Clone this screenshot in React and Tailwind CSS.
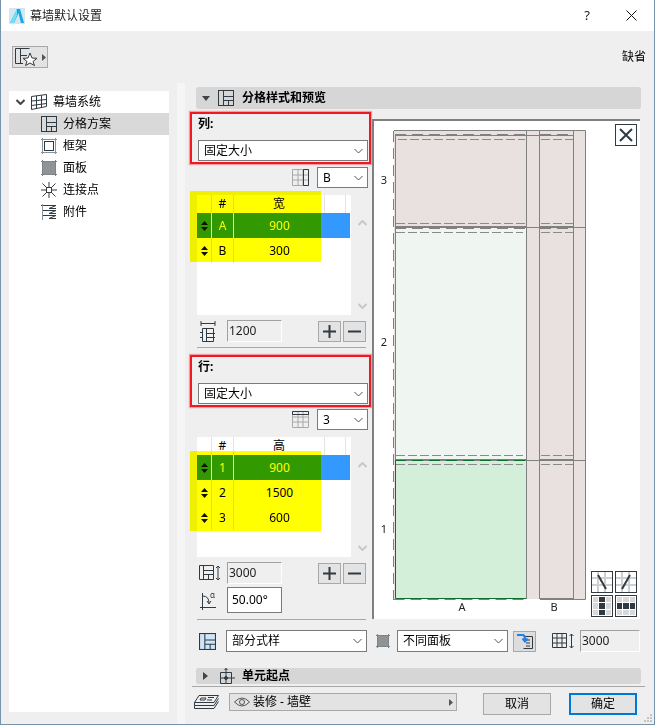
import React from "react";

const C = "#2f3a42";

function SchemeIcon({ size = 16, fill = "none" }) {
  return (
    <svg width={size} height={size} viewBox="0 0 16 16" className="block shrink-0" fill="none" stroke={C} strokeWidth="1">
      <rect x="0.5" y="0.5" width="15" height="15" fill={fill} />
      <path d="M5.5 .5V15.5M5.5 6.5H15.5M5.5 10.5H15.5M10.5 10.5V15.5" />
    </svg>
  );
}

function Chevron({ color = "#555", className = "", bold = false }) {
  return (
    <svg width="9" height="6" viewBox="0 0 9 6" className={"block shrink-0 " + className} fill="none" stroke={color} strokeWidth={bold ? 2 : 1}>
      <path d="M.5 1L4.5 5L8.5 1" />
    </svg>
  );
}

function TreeRow({ icon, label, selected, indent = 32 }) {
  return (
    <div className={"flex h-[22px] items-center " + (selected ? "bg-[#d9d9d9]" : "")} style={{ paddingLeft: indent }}>
      <div className="w-[22px] shrink-0 flex justify-start">{icon}</div>
      <span className="text-[12px] leading-none text-black">{label}</span>
    </div>
  );
}

function Select({ label, className = "" }) {
  return (
    <div className={"flex items-center justify-between bg-white border border-[#7a7a7a] pl-[5px] pr-[4px] text-[12px] leading-none text-black " + className}>
      <span>{label}</span>
      <Chevron />
    </div>
  );
}

function RedBox({ title }) {
  return (
    <div className="ml-[5px] h-[52px] w-[181px] border-2 border-[#f01822] pl-[6px] pr-[1px] shadow-[0_0_1px_1px_#f5a0a0]">
      <div className="mb-[6px] h-[20px] flex items-center text-[12px] leading-none font-bold text-black">{title}</div>
      <Select label="固定大小" className="h-[21px] w-[170px]" />
    </div>
  );
}

function Updown() {
  return (
    <svg width="7" height="10" viewBox="0 0 7 10" className="block" fill="#111">
      <path d="M3.5 0L7 4H0ZM0 6H7L3.5 10Z" />
    </svg>
  );
}

function DataTable({ head, rows, overlayTop, overlayH }) {
  return (
    <div className="relative ml-[5px] flex w-[181px] pl-[7px]">
      <div className="h-[120px] w-[154px] bg-white text-[12px] leading-none text-black">
        <div className="flex h-[18px]">
          <div className="w-[15px] border-r border-[#e4e4e4]" />
          <div className="w-[22px] border-r border-[#e4e4e4] flex items-center justify-center">#</div>
          <div className="w-[91px] border-r border-[#e4e4e4] flex items-center justify-center">{head}</div>
          <div className="w-[21px] border-r border-[#e4e4e4]" />
        </div>
        {rows.map((r, i) => (
          <div key={r[0]} className={"flex h-[25px] w-[153px] " + (i === 0 ? "bg-[#3399ff] text-white" : "")}>
            <div className={"w-[15px] border-r flex items-center justify-center " + (i === 0 ? "border-white" : "border-[#e4e4e4]")}>
              <Updown />
            </div>
            <div className={"w-[22px] border-r flex items-center justify-center " + (i === 0 ? "border-white" : "border-[#e4e4e4]")}>{r[0]}</div>
            <div className="w-[91px] flex items-center justify-center">{r[1]}</div>
          </div>
        ))}
      </div>
      <div className="flex h-[120px] w-[20px] flex-col items-center justify-between pl-[2px] pt-[25px] pb-[6px]">
        <Chevron color="#c8c8c8" bold className="rotate-180" />
        <Chevron color="#c8c8c8" bold />
      </div>
      <div className="absolute left-0 w-[131px] bg-[#ffff00] mix-blend-multiply" style={{ top: overlayTop, height: overlayH }} />
    </div>
  );
}

function GridSmall({ last }) {
  return (
    <svg width="17" height="17" viewBox="0 0 17 17" className="block shrink-0" fill="none" stroke="#a8a8a8">
      <path d="M.5 .5H16.5V16.5H.5ZM.5 6H16.5M.5 11H16.5M6 .5V16.5M11 .5V16.5" />
      {last === "col" ? <path d="M11.5 .5H16.5V16.5H11.5Z" stroke={C} /> : <path d="M.5 .5H16.5V3.5H.5Z" stroke={C} />}
    </svg>
  );
}

function PlusMinus() {
  return (
    <div className="flex gap-[2px]">
      <div className="flex h-[21px] w-[23px] items-center justify-center border border-[#a8a8a8] bg-[#e3e3e3]">
        <svg width="13" height="13" viewBox="0 0 13 13" className="block" stroke={C} strokeWidth="2"><path d="M6.5 0V13M0 6.5H13" /></svg>
      </div>
      <div className="flex h-[21px] w-[23px] items-center justify-center border border-[#a8a8a8] bg-[#e3e3e3]">
        <svg width="13" height="13" viewBox="0 0 13 13" className="block" stroke={C} strokeWidth="2"><path d="M0 6.5H13" /></svg>
      </div>
    </div>
  );
}

function ReadInput({ value, className = "" }) {
  return (
    <div className={"flex items-center border border-[#a0a0a0] border-r-white border-b-white pl-[1px] text-[12px] leading-none text-[#222] " + className}>
      {value}
    </div>
  );
}

function Preview() {
  const dash = { strokeDasharray: "11 6" };
  const hDash = (y, x1, x2, k) => <path key={k} d={`M${x1} ${y}H${x2}`} stroke="#8a8a8a" fill="none" style={{ strokeDasharray: "9 3" }} />;
  return (
    <div className="relative mt-[10px] h-[500px] w-[268px] border-l-2 border-t-2 border-[#808080] bg-white">
      <svg viewBox="374 121 266 498" width="266" height="498" className="block">
        <rect x="394" y="130.5" width="191.5" height="468.5" fill="#e9e1e0" />
        <rect x="395.5" y="228" width="131" height="232" fill="#eff5f1" />
        <rect x="395.5" y="460" width="131" height="138.5" fill="#d3efd9" />
        <path d="M395.5 135.5V460" fill="none" stroke="#808080" />
        <path d="M393.5 131V600" stroke="#808080" fill="none" style={dash} />
        <path d="M394 130.5H585.5V599.5H540" fill="none" stroke="#808080" />
        <path d="M393.5 599.5H526" fill="none" stroke="#808080" style={dash} />
        <path d="M395.5 460V598.5H526.5" fill="none" stroke="#0f6f2a" />
        <path d="M526.5 130.5V599M539.5 130.5V599M573.5 130.5V599M540 598.5H573" stroke="#808080" fill="none" />
        <path d="M395 135.5H573" stroke="#808080" fill="none" />
        <path d="M395 134.5H526M540 134.5H569" stroke="#808080" fill="none" style={dash} />
        <path d="M395 226.5H526M540 226.5H573M395 459.5H526M540 459.5H573" stroke="#808080" fill="none" />
        <path d="M395 227.5H585.5M395 460.5H585.5" stroke="#808080" fill="none" />
        <path d="M395 228.5H526M540 228.5H573" stroke="#808080" fill="none" style={dash} />
        <path d="M395 460.5H526" stroke="#0f6f2a" fill="none" style={dash} />
        {hDash(139.5, 398, 525, "a")}
        {hDash(139.5, 541, 573, "b")}
        {hDash(223.5, 396, 525, "c")}
        {hDash(223.5, 541, 573, "d")}
        {hDash(232.5, 396, 523, "e")}
        {hDash(232.5, 541, 573, "f")}
        {hDash(455.5, 396, 523, "g")}
        {hDash(455.5, 541, 573, "h")}
        {hDash(464.5, 396, 523, "i")}
        {hDash(464.5, 541, 573, "j")}
        <g fontFamily="'Noto Sans',sans-serif" fontSize="11" fill="#222" textAnchor="middle">
          <text x="384" y="184">3</text>
          <text x="384" y="346">2</text>
          <text x="384" y="533">1</text>
          <text x="462" y="611">A</text>
          <text x="554" y="611">B</text>
        </g>
      </svg>
      <div className="absolute left-[241px] top-[3px] flex h-[22px] w-[22px] items-center justify-center border border-[#2f3a42] bg-white">
        <svg width="14" height="14" viewBox="0 0 14 14" className="block" stroke={C} strokeWidth="2"><path d="M1 1L13 13M13 1L1 13" /></svg>
      </div>
      <div className="absolute left-[217px] top-[450px] grid grid-cols-[22px_22px] gap-[2px]">
        <div className="h-[22px] border border-[#2f3a42] bg-white">
          <svg width="20" height="20" viewBox="0 0 20 20" className="block">
            <path d="M0 6H20M0 13H20M6 0V20M13 0V20" stroke="#cfcfcf" strokeWidth="2" /><path d="M6 3L14 17" stroke={C} strokeWidth="2" />
          </svg>
        </div>
        <div className="h-[22px] border border-[#2f3a42] bg-white">
          <svg width="20" height="20" viewBox="0 0 20 20" className="block">
            <path d="M0 6H20M0 13H20M6 0V20M13 0V20" stroke="#cfcfcf" strokeWidth="2" /><path d="M14 3L6 17" stroke={C} strokeWidth="2" />
          </svg>
        </div>
        <div className="grid h-[22px] grid-cols-3 grid-rows-3 gap-[1px] border border-[#2f3a42] bg-white p-[1px]">
          {[0, 1, 0, 0, 1, 0, 0, 1, 0].map((v, i) => <div key={i} className={v ? "bg-[#2f3a42]" : "bg-[#d8d8d8]"} />)}
        </div>
        <div className="grid h-[22px] grid-cols-3 grid-rows-3 gap-[1px] border border-[#2f3a42] bg-white p-[1px]">
          {[0, 0, 0, 1, 1, 1, 0, 0, 0].map((v, i) => <div key={i} className={v ? "bg-[#2f3a42]" : "bg-[#d8d8d8]"} />)}
        </div>
      </div>
    </div>
  );
}

export default function App() {
  const panelIcon = (
    <svg width="16" height="16" viewBox="0 0 16 16" className="block" fill="none" stroke={C}>
      <rect x="1.5" y="1.5" width="13" height="13" fill="#8f9396" />
      <path d="M1.5 0V16M14.5 0V16M0 1.5H16M0 14.5H16" stroke="#7d8488" />
    </svg>
  );
  return (
    <div className="relative flex h-[725px] w-[655px] flex-col overflow-hidden bg-[#efefef] font-['Noto_Sans','Noto_Sans_CJK_SC',sans-serif]">
      {/* title bar */}
      <div className="flex h-[31px] shrink-0 items-center bg-white pl-[9px]">
        <svg width="16" height="16" viewBox="0 0 16 16" className="block shrink-0">
          <rect width="16" height="16" fill="#d6e6ee" />
          <path d="M1 15L8 1H11L15 15H12L9.5 5L5 15Z" fill="#14a7e6" />
          <path d="M1 15L8 1V7L5 15Z" fill="#6fe0f5" />
        </svg>
        <span className="ml-[5px] text-[12px] leading-none text-[#222]">幕墙默认设置</span>
        <span className="ml-auto mr-[36px] text-[13px] leading-none text-[#222]">?</span>
        <svg width="11" height="11" viewBox="0 0 11 11" className="mr-[18px] block" stroke="#111" fill="none"><path d="M.5 .5L10.5 10.5M10.5 .5L.5 10.5" /></svg>
      </div>
      {/* toolbar */}
      <div className="flex h-[52px] shrink-0 items-start pl-[12px] pr-[9px] pt-[15px]">
        <div className="flex h-[22px] w-[36px] items-center border border-[#a8a8a8] bg-[#e3e3e3] pl-[2px]">
          <svg width="24" height="18" viewBox="0 0 24 18" className="block" fill="none" stroke={C}>
            <path d="M.5 .5H14.5M.5 .5V15.5H8M5.5 .5V15.5M5.5 7.5H12" />
            <path d="M15 5L17 10L22 10.3L18 13.5L19.5 17.5L15 15L10.5 17.5L12 13.5L8 10.3L13 10Z" fill="#fff" />
          </svg>
          <svg width="4" height="7" viewBox="0 0 4 7" className="ml-[3px] block" fill="#555"><path d="M0 0L4 3.5L0 7Z" /></svg>
        </div>
        <span className="ml-auto mt-[5px] text-[12px] leading-none text-black">缺省</span>
      </div>
      {/* main */}
      <div className="flex min-h-0 flex-1">
        {/* tree */}
        <div className="ml-[9px] mt-[8px] h-[621px] w-[160px] shrink-0 bg-white">
          <div className="flex h-[22px] items-center pl-[7px]">
            <Chevron color="#444" bold />
            <svg width="16" height="16" viewBox="0 0 16 16" className="ml-[6px] block shrink-0" fill="none" stroke={C}>
              <path d="M.5 2.5L15.5 .5V12.5L.5 15.5ZM5.5 2V14.5M10.5 1.5V13.5M.5 7L15.5 5.5M.5 11.5L15.5 9.5" />
            </svg>
            <span className="ml-[6px] text-[12px] leading-none text-black">幕墙系统</span>
          </div>
          <TreeRow selected label="分格方案" icon={<SchemeIcon />} />
          <TreeRow label="框架" icon={
            <svg width="16" height="16" viewBox="0 0 16 16" className="block" fill="none" stroke={C}>
              <rect x="1.5" y="1.5" width="13" height="13" /><rect x="3.5" y="3.5" width="9" height="9" />
              <path d="M1.5 0V16M14.5 0V16M0 1.5H16M0 14.5H16" stroke="#8b9298" />
            </svg>} />
          <TreeRow label="面板" icon={panelIcon} />
          <TreeRow label="连接点" icon={
            <svg width="16" height="16" viewBox="0 0 16 16" className="block" fill="none" stroke={C}>
              <rect x="5.5" y="5.5" width="5" height="5" /><path d="M0 8H5M11 8H16M8 0V5M8 11V16M1.5 1.5L5.5 5.5M14.5 1.5L10.5 5.5M1.5 14.5L5.5 10.5M14.5 14.5L10.5 10.5" />
            </svg>} />
          <TreeRow label="附件" icon={
            <svg width="16" height="16" viewBox="0 0 16 16" className="block" fill="none" stroke={C}>
              <path d="M0 1.5H15L8 4.5H15M1 6.5H15L8 9.5H15M1 11.5H15L8 14.5H15" /><path d="M1.5 0V16" stroke="#8b9298" />
            </svg>} />
        </div>
        <div className="ml-[8px] h-full w-[8px] shrink-0 bg-[#f5f5f5]" />
        {/* right */}
        <div className="flex min-w-0 flex-1 flex-col pt-[4px]">
          <div className="ml-[11px] flex h-[22px] w-[445px] items-center rounded-[3px] bg-[#d6d6d6] pl-[6px]">
            <svg width="8" height="5" viewBox="0 0 8 5" className="block" fill="#444"><path d="M0 0H8L4 5Z" /></svg>
            <div className="ml-[8px]"><SchemeIcon /></div>
            <span className="ml-[8px] text-[12px] font-bold leading-none text-black">分格样式和预览</span>
          </div>
          <div className="flex">
            {/* controls */}
            <div className="w-[187px] shrink-0 pt-[3px]">
              <RedBox title="列:" />
              <div className="mt-[3px] flex h-[21px] items-center justify-end pr-[4px]">
                <GridSmall last="col" />
                <Select label="B" className="ml-[8px] h-[21px] w-[51px]" />
              </div>
              <div className="mt-[7px]">
                <DataTable head="宽" rows={[["A", "900"], ["B", "300"]]} overlayTop={-4} overlayH={71} />
              </div>
              <div className="mt-[5px] flex h-[22px] items-center pl-[15px]">
                <svg width="16" height="22" viewBox="0 0 16 22" className="block shrink-0" fill="none" stroke={C}>
                  <path d="M1 3.5H15M1 1V6M15 1V6" /><path d="M2.5 8.5H13.5V21.5H2.5ZM6.5 8.5V21.5M6.5 13.5H15M6.5 17.5H15M0 12.5H2M0 17.5H2" />
                </svg>
                <ReadInput value="1200" className="ml-[11px] h-[22px] w-[55px]" />
                <div className="ml-[36px]"><PlusMinus /></div>
              </div>
              <div className="ml-[12px] mt-[5px] h-px w-[169px] bg-[#a8a8a8]" />
              <div className="mt-[7px]"><RedBox title="行:" /></div>
              <div className="mt-[2px] flex h-[21px] items-center justify-end pr-[4px]">
                <GridSmall last="row" />
                <Select label="3" className="ml-[8px] h-[21px] w-[51px]" />
              </div>
              <div className="mt-[7px]">
                <DataTable head="高" rows={[["1", "900"], ["2", "1500"], ["3", "600"]]} overlayTop={14} overlayH={80} />
              </div>
              <div className="mt-[5px] flex h-[22px] items-center pl-[14px]">
                <svg width="22" height="16" viewBox="0 0 22 16" className="block shrink-0" fill="none" stroke={C}>
                  <path d="M.5 .5H14.5V14.5H.5ZM4.5 .5V14.5M4.5 5.5H14.5M4.5 9.5H14.5M9.5 9.5V14.5" />
                  <path d="M19 1V15M17 3L19 1L21 3M17 13L19 15L21 13" />
                </svg>
                <ReadInput value="3000" className="ml-[6px] h-[22px] w-[55px]" />
                <div className="ml-[36px]"><PlusMinus /></div>
              </div>
              <div className="mt-[3px] flex h-[26px] items-center pl-[15px]">
                <svg width="16" height="20" viewBox="0 0 16 20" className="block shrink-0" fill="none" stroke={C}>
                  <path d="M0 17.5H16M2.5 3V20M2.5 6Q9 6 9 13M7 11L9 14L11 11" />
                  <text x="10" y="8" fontSize="8" fill={C} stroke="none" fontFamily="'Noto Sans',sans-serif">α</text>
                </svg>
                <div className="ml-[11px] flex h-[26px] w-[55px] items-center border border-[#7a7a7a] bg-white pl-[4px] text-[12px] leading-none text-black">50.00°</div>
              </div>
              <div className="ml-[12px] mt-[6px] h-px w-[169px] bg-[#a8a8a8]" />
            </div>
            <Preview />
          </div>
          {/* bottom row */}
          <div className="mt-[10px] flex h-[22px] items-center pl-[14px]">
            <SchemeIcon size={17} fill="#cfe4f7" />
            <Select label="部分式样" className="ml-[10px] h-[22px] w-[141px] pl-[5px]" />
            <div className="ml-[8px] flex w-[16px] justify-center">
              <svg width="14" height="14" viewBox="0 0 14 14" className="block" fill="none" stroke={C}>
                <rect x="1.5" y="1.5" width="11" height="11" fill="#8f9396" /><path d="M1.5 0V14M12.5 0V14M0 1.5H14M0 12.5H14" stroke="#7d8488" />
              </svg>
            </div>
            <Select label="不同面板" className="ml-[6px] h-[22px] w-[111px]" />
            <div className="ml-[5px] flex h-[21px] w-[23px] items-center justify-center border border-[#a8a8a8] bg-[#dddddd]">
              <svg width="18" height="16" viewBox="0 0 18 16" className="block" fill="none">
                <path d="M7.5 3.5H16.5V15.5H7.5M10 7H14M10 10H14M10 13H14" stroke={C} />
                <path d="M1 2H7Q9 2 9 7M6.5 5.5L9 8.5L11.5 5.5" stroke="#1f7ef0" strokeWidth="2" />
              </svg>
            </div>
            <svg width="23" height="16" viewBox="0 0 23 16" className="ml-[16px] block shrink-0" fill="none" stroke={C}>
              <path d="M.5 .5H14.5V14.5H.5ZM5 .5V14.5M10 .5V14.5M.5 5H14.5M.5 10H14.5" />
              <path d="M19.5 1V15M17.5 3L19.5 1L21.5 3M17.5 13L19.5 15L21.5 13" />
            </svg>
            <ReadInput value="3000" className="ml-[5px] h-[22px] w-[60px]" />
          </div>
          {/* origin section */}
          <div className="ml-[11px] mt-[16px] flex h-[16px] w-[445px] items-center rounded-[3px] bg-[#d6d6d6] pl-[7px]">
            <svg width="5" height="8" viewBox="0 0 5 8" className="block" fill="#444"><path d="M0 0L5 4L0 8Z" /></svg>
            <svg width="16" height="16" viewBox="0 0 16 16" className="ml-[11px] block" fill="none" stroke={C}>
              <path d="M1.5 4.5H12.5V15.5H1.5ZM7 4.5V15.5M1.5 10H12.5M7 0V4M5.5 2L7 .5L8.5 2M13 10H16" /><circle cx="7" cy="10" r="1.5" fill={C} />
            </svg>
            <span className="ml-[7px] text-[12px] font-bold leading-none text-black">单元起点</span>
          </div>
        </div>
      </div>
      {/* footer, lies over the right column's end of the window */}
      <div className="absolute left-[192px] top-[686px] h-px w-[453px] bg-[#a8a8a8]" />
      <div className="absolute left-[194px] top-[693px] flex h-[22px] w-[443px] items-start">
        <svg width="25" height="16" viewBox="0 0 25 16" className="mt-[2px] block shrink-0" fill="none" stroke={C}>
          <path d="M5 .5H24.5L20 7.5H.5ZM.5 7.5V10.5H20L24.5 3.5M.5 10.5V13.5H20L24.5 6.5" /><path d="M7 3H12L11 5H6ZM14 2.5H20M13 5H18" />
        </svg>
        <div className="ml-[10px] flex h-[18px] w-[228px] items-center border border-[#a8a8a8] bg-[#e3e3e3] pl-[4px] pr-[3px] text-[12px] leading-none text-black">
          <svg width="16" height="10" viewBox="0 0 16 10" className="block shrink-0" fill="none" stroke="#555">
            <path d="M.5 5Q8 -3 15.5 5Q8 13 .5 5Z" /><circle cx="8" cy="5" r="2.5" />
          </svg>
          <span className="ml-[3px]">装修 - 墙壁</span>
          <svg width="4" height="7" viewBox="0 0 4 7" className="ml-auto block" fill="#555"><path d="M0 0L4 3.5L0 7Z" /></svg>
        </div>
        <div className="ml-[26px] flex h-[22px] w-[68px] items-center justify-center border border-[#a8a8a8] bg-[#e3e3e3] text-[12px] leading-none text-black">取消</div>
        <div className="ml-[18px] flex h-[22px] w-[68px] items-center justify-center border-2 border-[#0078d7] bg-[#e3e3e3] text-[12px] leading-none text-black">确定</div>
      </div>
      <div className="absolute bottom-[3px] right-[3px] grid grid-cols-3 gap-[1px]">
        {[0, 0, 1, 0, 1, 1, 1, 1, 1].map((v, i) => <div key={i} className={"h-[2px] w-[2px] " + (v ? "bg-[#c4c4c4]" : "")} />)}
      </div>
      <div className="pointer-events-none absolute inset-0 border border-t-0 border-[#7593ad]" />
    </div>
  );
}
